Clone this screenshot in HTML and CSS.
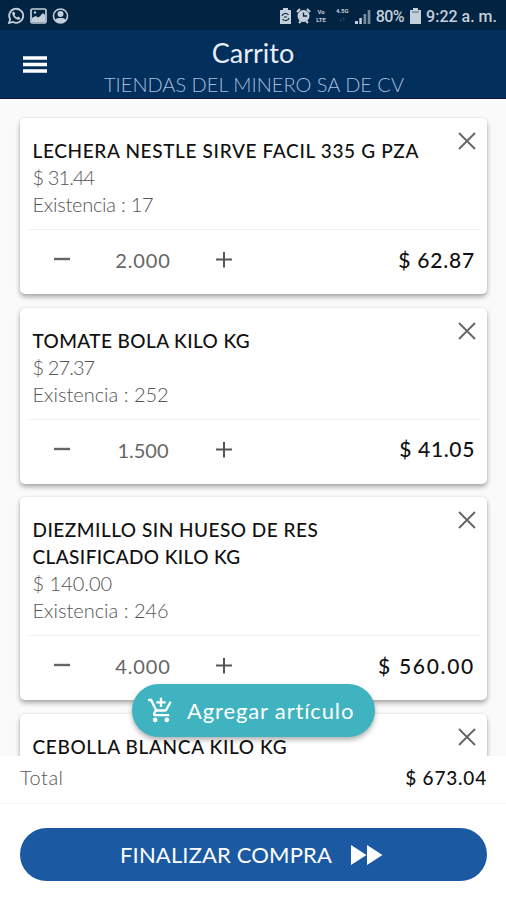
FILE: index.html
```html
<!DOCTYPE html>
<html lang="es">
<head>
<meta charset="utf-8">
<title>Carrito</title>
<link rel="stylesheet" href="styles.css">
</head>
<body>
<svg class="defs" aria-hidden="true">
  <symbol id="close" viewBox="0 0 18 18"><path d="M1 1l16 16M17 1L1 17" fill="none" stroke="#666" stroke-width="1.9"/></symbol>
  <symbol id="minus" viewBox="0 0 16 16"><path d="M0 7h16" stroke="#666" stroke-width="2.4"/></symbol>
  <symbol id="plus" viewBox="0 0 16 16"><path d="M0 7.500h16M8 0v15.500" stroke="#555" stroke-width="2"/></symbol>
</svg>
<div class="status">
  <div class="status-left">
    <svg width="18" height="18" viewBox="0 0 18 18"><path d="M2 16l1.200-3.600A7 7 0 1 1 6 15z" fill="none" stroke="currentColor" stroke-width="1.800"/><path d="M5.200 5.600l1.600-1.200 1.600 2.400-.9 1.100c.6 1.200 1.400 2 2.600 2.600l1.100-1 2.200 1.500-1 1.700c-3.300.9-7.600-3.200-7.200-7.100z" fill="currentColor"/></svg>
    <svg width="17" height="16" viewBox="0 0 17 16"><rect x="1" y="1" width="15" height="14" rx="1.500" fill="none" stroke="currentColor" stroke-width="1.700"/><path d="M2 10l3.500-2 3 1.500L13 5l2 2v7H2z" fill="currentColor"/><circle cx="5" cy="4.500" r="1.200" fill="currentColor"/></svg>
    <svg width="17" height="16" viewBox="0 0 17 16"><circle cx="8.500" cy="8" r="7" fill="none" stroke="currentColor" stroke-width="1.600"/><circle cx="8.500" cy="6" r="3" fill="currentColor"/><path d="M3 12.500c1-2.500 3-2.500 5.500-2.500s4.500 0 5.500 2.500c-2 3-9 3-11 0z" fill="currentColor"/></svg>
  </div>
  <div class="status-right">
    <svg width="11" height="16" viewBox="0 0 11 16"><path d="M3 0h5v2h3v14H0V2h3z" fill="currentColor"/><path d="M2 8a3.500 3 0 0 1 6.500-1M9 10a3.500 3 0 0 1-6.500 1M4 9h3" fill="none" stroke="#02223f" stroke-width="1.100"/></svg>
    <svg class="alarm" width="15" height="16" viewBox="0 0 15 16"><path d="M1 4l3-3M14 4l-3-3M3 15l2-2M12 15l-2-2" stroke="currentColor" stroke-width="2.200"/><circle cx="7.500" cy="8" r="6" fill="currentColor"/><path d="M7.500 4.500V8H11" fill="none" stroke="#02223f" stroke-width="1.300"/></svg>
    <span class="tiny volte"><span>Vo</span><span>LTE</span></span>
    <span class="tiny net"><span>4.5G</span><span class="arrows">↓↑</span></span>
    <svg class="signal" width="16" height="15" viewBox="0 0 16 15"><path d="M0 12h3v3H0zM4.300 9h2.500v6H4.300z" fill="currentColor"/><path d="M8.500 5h2.700v10H8.500zM12.700 1h2.700v14h-2.700z" fill="currentColor" opacity=".6"/></svg>
    <span class="pct">80%</span>
    <svg class="battery" width="11" height="16" viewBox="0 0 11 16"><path d="M3 0h5v2h3v14H0V2h3z" fill="currentColor"/><path d="M2 4h7" stroke="#02223f" opacity=".6"/></svg>
    <span class="clock">9:22 a. m.</span>
  </div>
</div>
<header class="bar">
  <svg class="menu" width="24" height="17" viewBox="0 0 24 17"><path d="M0 2h24M0 8.500h24M0 15h24" stroke="#fff" stroke-width="3.300"/></svg>
  <h1>Carrito</h1>
  <p>TIENDAS DEL MINERO SA DE CV</p>
</header>
<main class="list">
  <article class="card">
    <svg class="close"><use href="#close"/></svg>
    <h2><span class="ls-65">LECHERA NESTLE SIRVE FACIL 335 G PZA</span></h2>
    <p class="info price">$ 31.44</p>
    <p class="info stock">Existencia : 17</p>
    <div class="row"><svg class="op"><use href="#minus"/></svg><span class="qty">2.000</span><svg class="op"><use href="#plus"/></svg><strong class="ls-80">$ 62.87</strong></div>
  </article>
  <article class="card">
    <svg class="close"><use href="#close"/></svg>
    <h2><span class="ls-40">TOMATE BOLA KILO KG</span></h2>
    <p class="info price">$ 27.37</p>
    <p class="info">Existencia : 252</p>
    <div class="row"><svg class="op"><use href="#minus"/></svg><span class="qty narrow">1.500</span><svg class="op"><use href="#plus"/></svg><strong class="ls-65">$ 41.05</strong></div>
  </article>
  <article class="card">
    <svg class="close"><use href="#close"/></svg>
    <h2><span class="ls-50">DIEZMILLO SIN HUESO DE RES</span><br><span class="ls-40">CLASIFICADO KILO KG</span></h2>
    <p class="info">$ 140.00</p>
    <p class="info">Existencia : 246</p>
    <div class="row"><svg class="op"><use href="#minus"/></svg><span class="qty">4.000</span><svg class="op"><use href="#plus"/></svg><strong class="ls-170">$ 560.00</strong></div>
  </article>
  <article class="card">
    <svg class="close"><use href="#close"/></svg>
    <h2><span class="ls-65">CEBOLLA BLANCA KILO KG</span></h2>
  </article>
  <button class="add">
    <svg width="28" height="29" viewBox="0 0 24 24" fill="#fff"><path d="M11 9h2V6h3V4h-3V1h-2v3H8v2h3v3zm-4 9c-1.100 0-1.990.9-1.990 2S5.900 22 7 22s2-.9 2-2-.9-2-2-2zm10 0c-1.100 0-1.990.9-1.990 2s.89 2 1.990 2 2-.9 2-2-.9-2-2-2zm-9.830-3.250l.03-.12.9-1.630h7.450c.75 0 1.410-.41 1.750-1.030l3.860-7.010L19.420 4h-.01l-1.100 2-2.760 5H8.530l-.13-.27L6.160 6l-.95-2-.94-2H1v2h2l3.600 7.590-1.350 2.450c-.16.28-.25.61-.25.96 0 1.100.9 2 2 2h12v-2H7.420c-.13 0-.25-.11-.25-.25z"/></svg>
    <span class="add-label">Agregar artículo</span>
  </button>
</main>
<footer>
  <div class="total"><span class="label">Total</span><strong class="ls-80">$ 673.04</strong></div>
  <div class="checkout"><button class="buy"><span>FINALIZAR COMPRA</span><svg width="32" height="20" viewBox="0 0 32 20"><path d="M0 0l15.500 10L0 20zM16 0l15.500 10L16 20z" fill="#fff"/></svg></button></div>
</footer>
</body>
</html>
```
FILE: styles.css
```css
* { box-sizing: border-box; margin: 0; padding: 0; }
body { width: 506px; height: 900px; overflow: hidden; display: flex; flex-direction: column; background: #fff; font-family: "Lato", sans-serif; }
.defs { position: absolute; width: 0; height: 0; }
svg { display: block; flex: none; }
span, strong { white-space: nowrap; }
.ls-40 { letter-spacing: .4px; }
.ls-50 { letter-spacing: .5px; }
.ls-65 { letter-spacing: .65px; }
.ls-80 { letter-spacing: .8px; }
.ls-170 { letter-spacing: 1.7px; }
.status { height: 30px; flex: none; background: #022342; color: #c3cfdb; display: flex; justify-content: space-between; align-items: center; padding: 2px 9px 0 7px; font-family: "Roboto", sans-serif; }
.status-left, .status-right { display: flex; align-items: center; }
.status-left { gap: 5px; }
.alarm { margin-left: 5px; }
.tiny { display: flex; flex-direction: column; align-items: center; font-size: 6px; line-height: 8px; font-weight: 700; }
.volte { margin-left: 5px; }
.net { margin-left: 10px; margin-top: -3px; }
.arrows { opacity: .6; }
.signal { margin-left: 6px; }
.pct { font-size: 16px; font-weight: 500; margin-left: 5px; letter-spacing: -.5px; }
.battery { margin-left: 6px; }
.clock { font-size: 16px; font-weight: 500; margin-left: 5px; }
.bar { height: 69px; flex: none; background: #022f5c; border-bottom: 1px solid #12163e; position: relative; text-align: center; color: #e6eef8; }
.menu { position: absolute; left: 23px; top: 26px; }
.bar h1 { font-size: 27px; font-weight: 400; line-height: 32px; padding-top: 7px; }
.bar p { font-size: 20px; font-weight: 300; line-height: 26px; padding: 2px 0 0 2px; color: #a5bedf; }
.list { flex: none; height: 657px; overflow: hidden; position: relative; background: #fafafa; padding: 19px 19px 0 20px; display: flex; flex-direction: column; gap: 13.5px; }
.card { flex: none; background: #fff; border-radius: 5px; box-shadow: 0 3px 5px rgba(0,0,0,.32), 0 0 3px rgba(0,0,0,.08); padding: 19px 7px 0 8px; position: relative; }
.close { position: absolute; right: 11px; top: 14px; width: 18px; height: 18px; }
.card h2 { font-size: 19px; line-height: 27px; font-weight: 500; color: #111; padding-left: 4.5px; }
.info { font-size: 20px; line-height: 27px; font-weight: 300; color: #555; padding-left: 4.5px; }
.price { letter-spacing: -.9px; }
.stock { letter-spacing: -.25px; }
.row { height: 65px; margin-top: 11px; padding: 0 5px 4px 26px; border-top: 1px solid #f1f1f1; display: flex; align-items: center; }
.op { width: 16px; height: 16px; }
.qty { width: 146px; text-align: center; font-size: 20px; letter-spacing: .9px; color: #666; }
.narrow { letter-spacing: 0; }
.row strong { margin-left: auto; font-size: 21px; line-height: 24px; padding-bottom: 1px; font-weight: 500; color: #111; }
.add { position: absolute; left: 132px; top: 585px; width: 243px; height: 53px; border: 0; border-radius: 27px; background: #40b3c0; box-shadow: 0 3px 5px rgba(0,0,0,.3); display: flex; align-items: center; padding-left: 15px; gap: 12px; font: 400 22px "Lato", sans-serif; color: #fff; }
.add-label { letter-spacing: .85px; }
footer { flex: 1; background: #fff; }
.total { height: 48px; padding: 0 19px 5px 20px; border-bottom: 1px solid #f7f7f7; display: flex; justify-content: space-between; align-items: center; }
.label { font-size: 20px; font-weight: 300; letter-spacing: .5px; color: #555; }
.total strong { font-size: 19px; font-weight: 500; color: #111; }
.checkout { padding: 24px 19px 0 20px; }
.buy { width: 100%; height: 53px; border: 0; border-radius: 27px; background: #1b59a3; color: #fff; display: flex; align-items: center; padding-left: 100px; gap: 19px; font: 400 22px "Lato", sans-serif; letter-spacing: .15px; }
```
